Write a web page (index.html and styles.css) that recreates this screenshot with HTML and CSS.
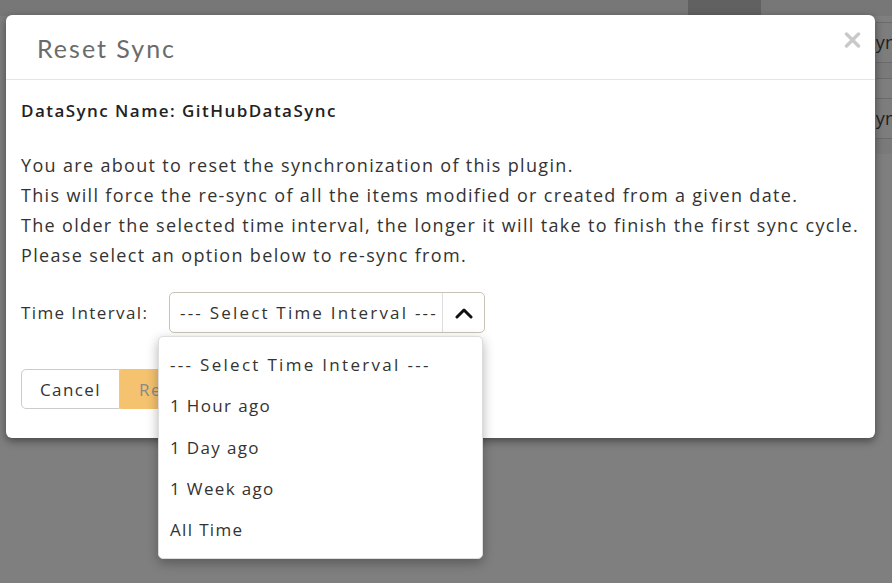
FILE: index.html
```html
<!DOCTYPE html>
<html>
<head>
<meta charset="utf-8">
<link rel="stylesheet" href="styles.css">
</head>
<body>
<div class="page">
  <div class="topbar"><div class="topbar-tab"></div></div>
  <div class="bg-table">
    <div class="bg-row bg-row-text">Sync</div>
    <div class="bg-row bg-row-thin"></div>
    <div class="bg-row bg-row-thin2"></div>
    <div class="bg-row bg-row-text">Sync</div>
    <div class="bg-row bg-row-thin"></div>
  </div>
</div>

<div class="modal">
  <div class="modal-header">
    <h4 class="modal-title">Reset Sync</h4>
    <button class="close" aria-label="Close">
      <svg width="17" height="16" viewBox="0 0 17 16"><path d="M2.5 2 L14.5 14 M14.5 2 L2.5 14" stroke="#c9c9c9" stroke-width="3.4" stroke-linecap="round"/></svg>
    </button>
  </div>
  <div class="modal-body">
    <p class="name">DataSync Name: GitHubDataSync</p>
    <p class="info">You are about to reset the synchronization of this plugin.<br>This will force the re-sync of all the items modified or created from a given date.<br>The older the selected time interval, the longer it will take to finish the first sync cycle.<br>Please select an option below to re-sync from.</p>
    <div class="field">
      <label class="field-label">Time Interval:</label>
      <div class="select">
        <div class="select-value">--- Select Time Interval ---</div>
        <div class="select-arrow">
          <svg width="18" height="12" viewBox="0 0 18 12"><polyline points="2,10 9,3 16,10" fill="none" stroke="#111" stroke-width="3" stroke-linecap="round" stroke-linejoin="round"/></svg>
        </div>
        <ul class="dropdown">
          <li>--- Select Time Interval ---</li>
          <li>1 Hour ago</li>
          <li>1 Day ago</li>
          <li>1 Week ago</li>
          <li>All Time</li>
        </ul>
      </div>
    </div>
    <div class="actions">
      <button class="btn btn-default">Cancel</button>
      <button class="btn btn-primary">Reset</button>
    </div>
  </div>
</div>
</body>
</html>
```
FILE: styles.css
```css
* { box-sizing: border-box; }
html, body { margin: 0; padding: 0; }
body {
  width: 892px;
  height: 583px;
  overflow: hidden;
  background: #7f7f7f;
  font-family: "Open Sans", "Noto Sans", sans-serif;
  position: relative;
}
.page {
  height: 583px;
  display: flex;
  flex-direction: column;
}
.topbar {
  height: 16px;
  background: #777777;
  display: flex;
  padding-left: 688px;
}
.topbar-tab {
  width: 73px;
  background: #616161;
}
.bg-table {
  margin-left: 876px;
  margin-top: 6px;
  display: flex;
  flex-direction: column;
  font-family: "Open Sans", sans-serif;
  font-size: 18px;
  color: #1e1e1e;
}
.bg-row {
  border-top: 1px solid #6b6b6b;
  white-space: nowrap;
  text-indent: -10px;
  overflow: hidden;
}
.bg-row-text { height: 40px; line-height: 38px; background: #7d7d7d; }
.bg-row-thin { height: 16px; background: #7a7a7a; }
.bg-row-thin2 { height: 20px; background: #7e7e7e; }

.modal {
  position: absolute;
  left: 6px;
  top: 15px;
  width: 869px;
  height: 423px;
  background: #ffffff;
  border-radius: 6px;
  box-shadow: 0 3px 9px rgba(0,0,0,0.45);
}
.modal-header {
  height: 65px;
  border-bottom: 1px solid #e5e5e5;
  display: flex;
  align-items: center;
  justify-content: space-between;
  padding: 0 14px 0 31px;
}
.modal-title {
  margin: 0;
  font-family: "Lato", sans-serif;
  font-weight: 400;
  font-size: 25px;
  letter-spacing: 2px;
  color: #6b6b6b;
  padding-top: 2px;
}
.close {
  border: 0;
  background: none;
  padding: 0;
  margin-top: -15px;
  cursor: pointer;
  display: flex;
}
.modal-body {
  padding: 16px 15px 0 15px;
  color: #333333;
  font-size: 17px;
  letter-spacing: 1.25px;
}
.name {
  margin: 0;
  font-size: 17px;
  font-weight: 600;
  line-height: 30px;
  color: #222;
  letter-spacing: 1.45px;
}
.info {
  margin: 24px 0 0 0;
  line-height: 30px;
  font-size: 18px;
  letter-spacing: 1.33px;
  white-space: nowrap;
}
.field {
  margin-top: 22px;
  display: flex;
  align-items: center;
  gap: 20px;
}
.field-label {
  color: #333;
  width: 128px;
  white-space: nowrap;
  letter-spacing: 1.4px;
}
.select {
  position: relative;
  width: 316px;
  height: 41px;
  border: 1px solid #c9c3b6;
  border-radius: 5px;
  display: flex;
  align-items: center;
}
.select-value {
  flex: 1;
  padding-left: 10px;
  white-space: nowrap;
  overflow: hidden;
  color: #333;
  letter-spacing: 2.2px;
}
.select-arrow {
  width: 42px;
  height: 100%;
  border-left: 1px solid #ddd;
  display: flex;
  align-items: center;
  justify-content: center;
}
.dropdown {
  position: absolute;
  left: -12px;
  top: 43px;
  width: 325px;
  margin: 0;
  padding: 10px 0 5px 0;
  list-style: none;
  background: #fff;
  border: 1px solid #ddd;
  border-radius: 5px;
  box-shadow: 0 4px 12px rgba(0,0,0,0.3);
  z-index: 5;
  letter-spacing: 1.35px;
}
.dropdown li {
  height: 41.3px;
  line-height: 36px;
  padding-left: 11px;
  color: #333;
  white-space: nowrap;
}
.dropdown li:first-child {
  letter-spacing: 2.3px;
}
.actions {
  margin-top: 36px;
  display: flex;
}
.btn {
  height: 40px;
  font-family: inherit;
  font-size: 17px;
  letter-spacing: 1.4px;
  border: 1px solid #cccccc;
  padding: 0 18px;
  cursor: pointer;
}
.btn-default {
  background: #fff;
  color: #333;
  border-radius: 5px 0 0 5px;
  width: 99px;
}
.btn-primary {
  background: #f5c36f;
  border-color: #f5c36f;
  color: #8a8a8a;
  border-radius: 0 5px 5px 0;
  width: 90px;
  text-align: left;
}
```
